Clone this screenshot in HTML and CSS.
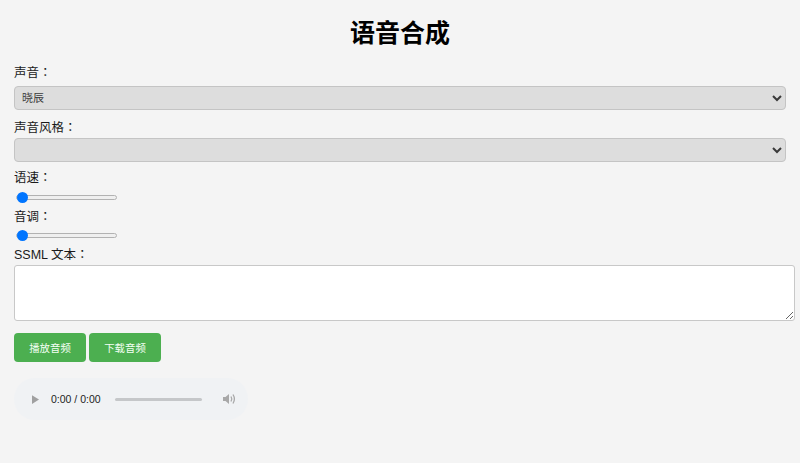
FILE: index.html
```html
<!DOCTYPE html>
<html lang="zh-CN">
<head>
<meta charset="utf-8">
<title>语音合成</title>
<link rel="stylesheet" href="styles.css">
</head>
<body>
<h1 class="title">语音合成</h1>
<label class="lbl lbl-voice" for="voice">声音：</label>
<select id="voice" class="sel sel-voice"><option>晓辰</option></select>
<label class="lbl lbl-style" for="style">声音风格：</label>
<select id="style" class="sel sel-style"><option></option></select>
<label class="lbl lbl-rate" for="rate">语速：</label>
<input id="rate" class="range range-rate" type="range" min="0" max="100" value="0">
<label class="lbl lbl-pitch" for="pitch">音调：</label>
<input id="pitch" class="range range-pitch" type="range" min="0" max="100" value="0">
<label class="lbl lbl-ssml" for="ssml">SSML 文本：</label>
<textarea id="ssml" class="ssml"></textarea>
<div class="actions">
  <button class="btn">播放音频</button>
  <button class="btn">下载音频</button>
</div>
<div class="player">
  <svg class="play" width="8" height="10" viewBox="0 0 8 10"><path d="M0 0 L8 5 L0 10 Z" fill="#a0a0a0"/></svg>
  <span class="time">0:00 / 0:00</span>
  <span class="track"></span>
  <svg class="vol" width="13" height="12" viewBox="0 0 13 12"><path d="M0 4 H2.5 L6 1 V11 L2.5 8 H0 Z" fill="#a8a8a8"/><path d="M8 3.5 Q9.6 6 8 8.5" stroke="#a8a8a8" stroke-width="1.3" fill="none"/><path d="M10 1.5 Q12.8 6 10 10.5" stroke="#a8a8a8" stroke-width="1.3" fill="none"/></svg>
</div>
</body>
</html>
```
FILE: styles.css
```css
html, body {
  margin: 0;
  background: #f4f4f4;
}
body {
  padding: 0 14px;
  font-family: "Liberation Sans", "Noto Sans CJK SC", sans-serif;
  font-size: 12.5px;
  color: #111;
}
.title {
  margin: 18px 0 0;
  font-size: 25px;
  line-height: 30px;
  text-align: center;
  font-weight: bold;
  color: #000;
}
.lbl {
  display: block;
  line-height: 15px;
  height: 15px;
  color: #1a1a1a;
  font-family: "Liberation Sans", "Noto Sans CJK JP", sans-serif;
  font-feature-settings: "locl" 0;
}
.lbl-voice { margin-top: 18px; }
.lbl-style { margin-top: 11px; }
.lbl-rate { margin-top: 9px; }
.lbl-pitch { margin-top: 7px; }
.lbl-ssml { margin-top: 7px; }

.sel {
  display: block;
  width: 100%;
  box-sizing: border-box;
  height: 24px;
  background-color: #dddddd;
  border: 1px solid #c4c4c4;
  border-radius: 4px;
  font-family: "Liberation Sans", "Noto Sans CJK SC", sans-serif;
  font-size: 11px;
  color: #3a3a3a;
  padding: 0 3px;
}
.sel-voice { margin-top: 5px; }
.sel-style { margin-top: 2px; }

.range {
  display: block;
  -webkit-appearance: none;
  appearance: none;
  width: 101px;
  height: 12px;
  margin: 0 0 0 2px;
  background: transparent;
  padding: 0;
}
.range-rate { margin-top: 5px; }
.range-pitch { margin-top: 4px; }
.range::-webkit-slider-runnable-track {
  height: 5px;
  background: #efefef;
  border: 1px solid #b2b2b2;
  border-radius: 4px;
}
.range::-webkit-slider-thumb {
  -webkit-appearance: none;
  appearance: none;
  width: 11px;
  height: 11px;
  border-radius: 50%;
  background: #0075ff;
  margin-top: -4px;
}

.ssml {
  display: block;
  margin: 2px 0 0;
  width: 100%;
  height: 46px;
  padding: 4px 3.5px;
  border: 1px solid #c8c8c8;
  border-radius: 3px;
  background: #fff;
  font-family: "Liberation Sans", "Noto Sans CJK SC", sans-serif;
  font-size: 11px;
}

.actions {
  display: flex;
  gap: 3px;
  margin-top: 12px;
}
.btn {
  width: 72px;
  height: 29px;
  background: #4caf50;
  color: #f4fff4;
  border: none;
  border-radius: 4px;
  font-family: "Liberation Sans", "Noto Sans CJK SC", sans-serif;
  font-size: 10.4px;
  padding: 0;
}

.player {
  display: flex;
  align-items: center;
  width: 234px;
  height: 42px;
  margin-top: 16px;
  border-radius: 21px;
  background: #f0f2f4;
  box-sizing: border-box;
  padding-left: 18px;
}
.play {
  display: block;
  width: 7px;
  height: 9px;
}
.time {
  margin-left: 12px;
  font-size: 10.5px;
  color: #222;
}
.track {
  display: block;
  width: 87px;
  height: 3px;
  border-radius: 2px;
  background: #c5c7c9;
  margin-left: 14px;
}
.vol {
  display: block;
  margin-left: 21px;
}
```
